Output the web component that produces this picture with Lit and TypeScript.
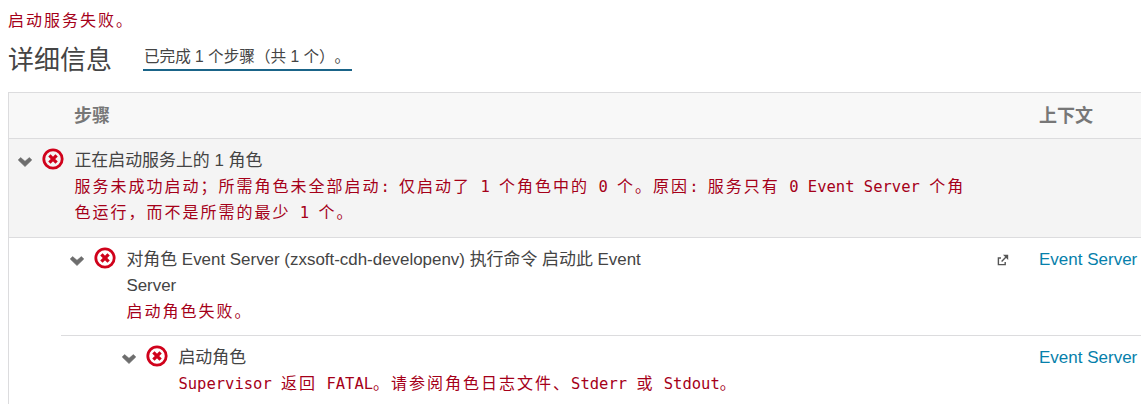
import { LitElement, html, css } from "lit";
import { customElement, property } from "lit/decorators.js";

interface Step {
  level: number;
  title: string[];
  result: string[];
  context?: string;
  external?: boolean;
}

const STEPS: Step[] = [
  {
    level: 0,
    title: ["正在启动服务上的 1 角色"],
    result: [
      "服务未成功启动；所需角色未全部启动: 仅启动了 1 个角色中的 0 个。原因: 服务只有 0 Event Server 个角",
      "色运行，而不是所需的最少 1 个。",
    ],
  },
  {
    level: 1,
    title: ["对角色 Event Server (zxsoft-cdh-developenv) 执行命令 启动此 Event", "Server"],
    result: ["启动角色失败。"],
    context: "Event Server",
    external: true,
  },
  {
    level: 2,
    title: ["启动角色"],
    result: ["Supervisor 返回 FATAL。请参阅角色日志文件、Stderr 或 Stdout。"],
    context: "Event Server",
  },
];

@customElement("result-line")
class ResultLine extends LitElement {
  @property() text = "";

  static styles = css`
    :host {
      display: block;
      height: 26px;
      line-height: 26px;
      white-space: pre;
      color: #a50019;
    }
    .latin {
      font: 15.5px/26px "DejaVu Sans Mono", monospace;
    }
    .cjk {
      font: 400 16px/26px "Noto Sans CJK SC", sans-serif;
      letter-spacing: 2px;
      text-spacing-trim: space-all;
    }
  `;

  render() {
    const runs = this.text.match(/[\x20-\x7e]+|[^\x20-\x7e]+/g) ?? [];
    return runs.map(
      (run) => html`<span class=${run.charCodeAt(0) < 127 ? "latin" : "cjk"}>${run}</span>`
    );
  }
}

@customElement("step-row")
class StepRow extends LitElement {
  @property({ attribute: false }) step!: Step;

  static styles = css`
    :host {
      display: block;
    }
    .row {
      display: grid;
      grid-template-columns: 51px 1fr 43px 102px;
      height: 97px;
      padding-top: 8px;
      padding-left: 14px;
      box-sizing: border-box;
      border-bottom: 1px solid #dcdcde;
    }
    .level0 {
      height: 99px;
      background: #f4f4f4;
    }
    .level1 {
      height: 98px;
      margin-left: 52px;
    }
    .level2 {
      margin-left: 104px;
    }
    .icons {
      display: flex;
      align-items: flex-start;
      margin-left: -6px;
    }
    .chevron {
      width: 16px;
      height: 12px;
      margin: 9px 9px 0 0;
      flex: none;
    }
    .error {
      width: 22px;
      height: 22px;
      margin-top: 1px;
      flex: none;
    }
    .title,
    .context {
      height: 25px;
      padding-top: 1px;
      font: 17px/26px "Liberation Sans", "Noto Sans CJK SC", sans-serif;
      white-space: pre;
      color: #444;
    }
    .title {
      height: 26px;
      padding-top: 0;
      font-size: 16.93px;
    }
    .text {
      min-width: 0;
      padding: 1px 0 0 0.4px;
    }
    .results {
      margin-top: -2px;
    }
    .context {
      color: #067fab;
      text-decoration: none;
    }
    .external {
      width: 12px;
      height: 12px;
      margin: 8px 0 0 1px;
    }
  `;

  render() {
    const s = this.step;
    return html`
      <div class="row level${s.level}">
        <div class="icons">
          <svg class="chevron" viewBox="0 0 16 12">
            <path d="M1.2 4 3.6 1.6 8 5.3 12.4 1.6 14.8 4 8 10.6Z" fill="#6d6d6d" stroke="#6d6d6d" stroke-width=".6" stroke-linejoin="round" />
          </svg>
          <svg class="error" viewBox="0 0 22 22">
            <circle cx="11" cy="11" r="9.2" fill="none" stroke="#d0021b" stroke-width="2.8" />
            <path d="M7.4 7.4 14.6 14.6M14.6 7.4 7.4 14.6" stroke="#d0021b" stroke-width="3.3" />
          </svg>
        </div>
        <div class="text">
          ${s.title.map((t) => html`<div class="title">${t}</div>`)}
          <div class="results">
            ${s.result.map((t) => html`<result-line .text=${t}></result-line>`)}
          </div>
        </div>
        <div>
          ${s.external
            ? html`<svg class="external" viewBox="0 0 12 12" fill="none" stroke="#555" stroke-width="1.4">
                <path d="M4 4H1.4V10.6H8.2V8M4.6 7.4 10 2" />
                <path d="M6 .8H11.2V6Z" fill="#555" stroke="none" />
              </svg>`
            : ""}
        </div>
        ${s.context ? html`<a class="context">${s.context}</a>` : ""}
      </div>
    `;
  }
}

@customElement("app-root")
class AppRoot extends LitElement {
  static styles = css`
    :host {
      display: block;
      height: 404px;
      overflow: hidden;
      background: #fff;
      font-family: "Liberation Sans", "Noto Sans CJK SC", sans-serif;
    }
    .page {
      padding: 6px 0 0 8px;
    }
    .heading {
      display: flex;
      height: 60px;
    }
    .heading h2 {
      margin: 0;
      width: 135px;
      font-size: 26px;
      font-weight: 400;
      line-height: 57px;
      color: #444;
    }
    .progress {
      box-sizing: border-box;
      width: 209px;
      height: 26px;
      margin-top: 13px;
      padding-left: 1px;
      border-bottom: 2px solid #1a6488;
      font-size: 15.6px;
      line-height: 24px;
      white-space: pre;
      text-spacing-trim: space-all;
      color: #444;
    }
    .table {
      border: 1px solid #dcdcde;
      border-width: 1px 0 0 1px;
    }
    .head {
      display: grid;
      grid-template-columns: 1fr 102px;
      box-sizing: border-box;
      height: 46px;
      padding-left: 65px;
      border-bottom: 1px solid #dcdcde;
      background: #f8f8f8;
      font-size: 18px;
      font-weight: bold;
      line-height: 46px;
      color: #777;
    }
  `;

  render() {
    return html`
      <div class="page">
        <result-line .text=${"启动服务失败。"}></result-line>
        <div class="heading">
          <h2>详细信息</h2>
          <div class="progress">已完成 1 个步骤（共 1 个）。</div>
        </div>
        <div class="table">
          <div class="head"><span>步骤</span><span>上下文</span></div>
          ${STEPS.map((s) => html`<step-row .step=${s}></step-row>`)}
        </div>
      </div>
    `;
  }
}
